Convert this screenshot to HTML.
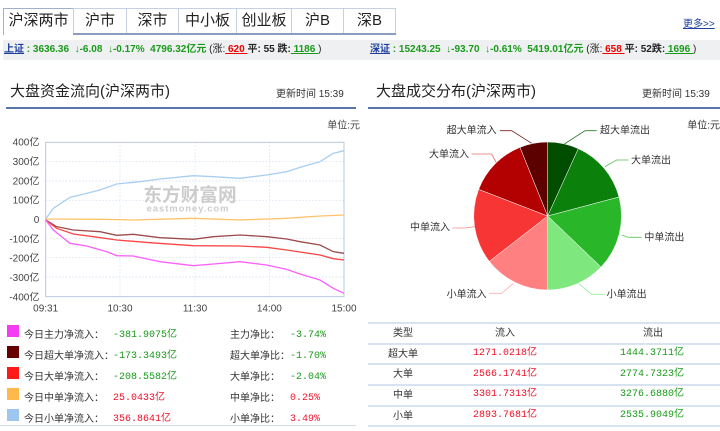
<!DOCTYPE html>
<html><head><meta charset="utf-8"><style>
*{margin:0;padding:0;box-sizing:border-box}
body{width:720px;height:431px;overflow:hidden;background:#fff;position:relative;font-family:"Liberation Sans","Noto Sans CJK SC",sans-serif;color:#333}
.a{position:absolute;white-space:nowrap}
.tab{position:absolute;top:8px;height:25px;border:1px solid #c5d0e0;border-bottom:none;background:#fff;font-size:15px;line-height:24px;text-align:center;color:#222}
.q{font-size:10px;font-weight:bold;color:#1a9a1a;line-height:20px}
.q u{color:#1f3f9f}
.r{color:#e00;text-decoration:underline}
.k{color:#222}
.gu{color:#1a9a1a;text-decoration:underline}
.h{font-size:15px;color:#222}
.t{font-size:10px;color:#333}
.m{font-family:"Liberation Mono","Noto Sans CJK SC",monospace;font-size:10px}
.lg{font-size:10px;color:#333}
.sq{position:absolute;width:12px;height:12px;left:7px}
.gr{color:#1a9a1a}.rd{color:#f0102a}
</style></head><body>
<div class="tab" style="left:3px;width:71px;height:27px;border-color:#a0b0c8">沪深两市</div>
<div class="tab" style="left:73px;width:54px">沪市</div>
<div class="tab" style="left:126px;width:53px">深市</div>
<div class="tab" style="left:178px;width:59px">中小板</div>
<div class="tab" style="left:236px;width:56px">创业板</div>
<div class="tab" style="left:291px;width:53px">沪B</div>
<div class="tab" style="left:343px;width:53px">深B</div>
<div class="a" style="left:73px;top:33px;width:323px;height:2px;background:#8a9cc0"></div>
<div class="a" style="left:683px;top:15px;font-size:10px;color:#1f3f9f;text-decoration:underline">更多&gt;&gt;</div>
<div class="a" style="left:3px;top:40px;width:717px;height:20px;background:#eef0f2"></div>
<div class="a q" style="left:4px;top:40px"><u>上证</u> : 3636.36 &nbsp;↓-6.08 &nbsp;↓-0.17% &nbsp;4796.32亿元 <span class="k" style="font-weight:normal">(涨:</span><span class="r">&nbsp;620&nbsp;</span><span class="k">平: 55 跌:</span><span class="gu">&nbsp;1186&nbsp;</span><span class="k" style="font-weight:normal">)</span></div>
<div class="a q" style="left:370px;top:40px"><u>深证</u> : 15243.25 &nbsp;↓-93.70 &nbsp;↓-0.61% &nbsp;5419.01亿元 <span class="k" style="font-weight:normal">(涨:</span><span class="r">&nbsp;658&nbsp;</span><span class="k">平: 52跌:</span><span class="gu">&nbsp;1696&nbsp;</span><span class="k" style="font-weight:normal">)</span></div>
<div class="a h" style="left:10px;top:80px">大盘资金流向(沪深两市)</div>
<div class="a t" style="left:276px;top:85px">更新时间 15:39</div>
<div class="a" style="left:6px;top:107px;width:350px;height:2px;background:#5877a8"></div>
<div class="a h" style="left:376px;top:80px">大盘成交分布(沪深两市)</div>
<div class="a t" style="left:642px;top:85px">更新时间 15:39</div>
<div class="a" style="left:368px;top:107px;width:352px;height:2px;background:#5877a8"></div>

<svg class="a" style="left:0;top:110px" width="360" height="210" viewBox="0 0 1080 630">
<g font-size="30" fill="#444" font-family="Liberation Sans,sans-serif" text-anchor="end">
<text x="1080" y="55" font-family="Liberation Sans,Noto Sans CJK SC,sans-serif">单位:元</text>
<text x="118" y="107">400亿</text><text x="118" y="165">300亿</text><text x="118" y="223">200亿</text><text x="118" y="281">100亿</text><text x="118" y="339">0</text><text x="118" y="397">-100亿</text><text x="118" y="455">-200亿</text><text x="118" y="513">-300亿</text><text x="118" y="571">-400亿</text>
</g>
<g font-size="30" fill="#444" text-anchor="middle">
<text x="137" y="605">09:31</text><text x="360" y="605">10:30</text><text x="585" y="605">11:30</text><text x="808" y="605">14:00</text><text x="1032" y="605">15:00</text>
</g>
<g stroke="#c8d8ec" stroke-width="2" stroke-dasharray="4 6" fill="none">
<path d="M137 155H1032M137 213H1032M137 271H1032M137 385H1032M137 443H1032M137 501H1032M360 97V560M585 97V560M808 97V560"/>
</g>
<rect x="137" y="97" width="895" height="463" fill="none" stroke="#b8c8de" stroke-width="3"/>
<g fill="#ccc" font-weight="bold" font-family="Liberation Sans,Noto Sans CJK SC,sans-serif"><text x="430" y="275" font-size="56">东方财富网</text><text x="440" y="305" font-size="28" letter-spacing="3">eastmoney.com</text></g>
<g fill="none" stroke-width="4">
<path stroke="#a9cef2" d="M137 327L160 295L210 262L240 255L300 240L350 222L420 215L480 207L580 197L640 200L720 205L800 195L860 185L900 172L960 155L1000 130L1032 122"/>
<path stroke="#fec36a" d="M137 327L300 328L400 330L580 325L720 330L860 325L960 318L1032 315"/>
<path stroke="#9d4b4b" d="M137 330L170 350L220 360L300 365L350 376L400 373L480 383L580 388L640 380L720 375L800 380L860 387L900 395L960 405L1000 425L1032 430"/>
<path stroke="#f84545" d="M137 330L170 355L220 372L280 380L350 390L450 398L580 407L720 408L800 412L860 420L960 435L1000 446L1032 450"/>
<path stroke="#fa60fa" d="M137 330L160 360L210 400L260 408L320 425L350 437L400 438L480 455L580 467L640 462L720 455L800 465L860 478L900 492L960 510L1000 535L1032 550"/>
</g>
</svg>

<svg class="a" style="left:365px;top:110px" width="355" height="210" viewBox="0 0 1065 630">
<text x="1065" y="55" font-size="30" fill="#333" text-anchor="end">单位:元</text>
<g stroke="#fff" stroke-width="1.5">
<path fill="#004d00" d="M548 318L548 96A222 222 0 0 1 640 116Z"/>
<path fill="#0b800b" d="M548 318L640 116A222 222 0 0 1 762 261Z"/>
<path fill="#29b629" d="M548 318L762 261A222 222 0 0 1 708 471Z"/>
<path fill="#7ee87e" d="M548 318L708 471A222 222 0 0 1 548 540Z"/>
<path fill="#ff8080" d="M548 318L548 540A222 222 0 0 1 373 454Z"/>
<path fill="#f83535" d="M548 318L373 454A222 222 0 0 1 341 238Z"/>
<path fill="#b30000" d="M548 318L341 238A222 222 0 0 1 465 112Z"/>
<path fill="#5c0000" d="M548 318L465 112A222 222 0 0 1 548 96Z"/>
</g>
<g fill="none" stroke-width="2.5">
<path stroke="#7a2020" d="M500 100L440 62H405"/><path stroke="#2a7a2a" d="M598 102L660 62H695"/>
<path stroke="#e07070" d="M395 160L380 132H320"/><path stroke="#55c055" d="M720 170L755 150H790"/>
<path stroke="#ff8a8a" d="M330 350L300 354H262"/><path stroke="#55c855" d="M770 375L790 382H830"/>
<path stroke="#ffb0b0" d="M445 520L410 550H372"/><path stroke="#99ee99" d="M640 520L680 553H720"/>
</g>
<g font-size="30" fill="#333" font-family="Liberation Sans,Noto Sans CJK SC,sans-serif">
<text x="245" y="70">超大单流入</text><text x="705" y="70">超大单流出</text>
<text x="192" y="142">大单流入</text><text x="798" y="160">大单流出</text>
<text x="135" y="362">中单流入</text><text x="838" y="392">中单流出</text>
<text x="245" y="562">小单流入</text><text x="725" y="562">小单流出</text>
</g>
</svg>

<div class="sq" style="top:325px;background:#f43cf4"></div>
<div class="sq" style="top:346px;background:#660000"></div>
<div class="sq" style="top:367px;background:#ff1a1a"></div>
<div class="sq" style="top:388px;background:#ffb84a"></div>
<div class="sq" style="top:409px;background:#9fc6ee"></div>
<div class="a lg" style="left:24px;top:325px;line-height:21px">今日主力净流入：<br>今日超大单净流入：<br>今日大单净流入：<br>今日中单净流入：<br>今日小单净流入：</div>
<div class="a m" style="left:113px;top:325px;line-height:21px"><span class="gr">-381.9075亿</span><br><span class="gr">-173.3493亿</span><br><span class="gr">-208.5582亿</span><br><span class="rd">25.0433亿</span><br><span class="rd">356.8641亿</span></div>
<div class="a lg" style="left:230px;top:325px;line-height:21px">主力净比：<br>超大单净比：<br>大单净比：<br>中单净比：<br>小单净比：</div>
<div class="a m" style="left:290px;top:325px;line-height:21px"><span class="gr">-3.74%</span><br><span class="gr">-1.70%</span><br><span class="gr">-2.04%</span><br><span class="rd">0.25%</span><br><span class="rd">3.49%</span></div>
<div class="a" style="left:0;top:425px;width:356px;height:1px;background:#d0dcea"></div>

<div class="a" style="left:368px;top:322px;width:352px;height:2px;background:#d7e3f0"></div>
<div class="a" style="left:368px;top:343px;width:352px;height:2px;background:#d7e3f0"></div>
<div class="a" style="left:368px;top:363px;width:352px;height:2px;background:#d7e3f0"></div>
<div class="a" style="left:368px;top:384px;width:352px;height:2px;background:#d7e3f0"></div>
<div class="a" style="left:368px;top:405px;width:352px;height:2px;background:#d7e3f0"></div>
<div class="a" style="left:368px;top:425px;width:352px;height:2px;background:#d7e3f0"></div>
<div class="a lg" style="left:368px;width:70px;top:324px;line-height:20.7px;text-align:center">类型<br>超大单<br>大单<br>中单<br>小单</div>
<div class="a lg" style="left:470px;width:70px;top:324px;text-align:center">流入</div>
<div class="a lg" style="left:618px;width:70px;top:324px;text-align:center">流出</div>
<div class="a m rd" style="left:473px;top:344px;line-height:20.7px">1271.0218亿<br>2566.1741亿<br>3301.7313亿<br>2893.7681亿</div>
<div class="a m gr" style="left:620px;top:344px;line-height:20.7px">1444.3711亿<br>2774.7323亿<br>3276.6880亿<br>2535.9049亿</div>
</body></html>
